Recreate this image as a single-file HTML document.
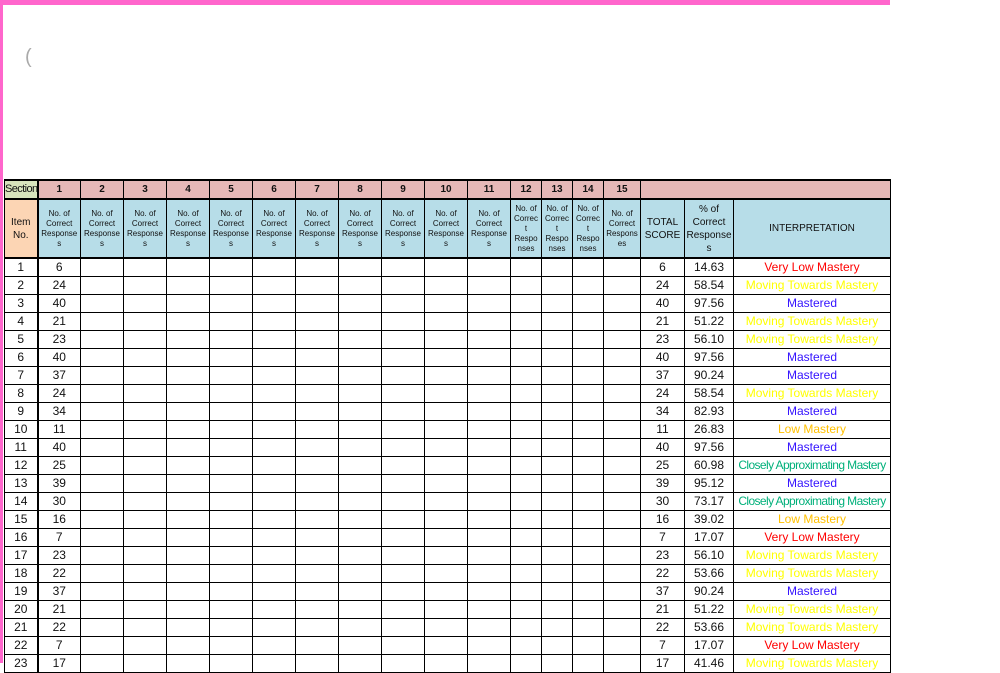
<!DOCTYPE html>
<html><head><meta charset="utf-8"><style>
body{margin:0;width:1000px;height:663px;overflow:hidden;background:#fff;font-family:"Liberation Sans",Arial,sans-serif;position:relative}
.pt{position:absolute;left:0;top:0;width:890px;height:5px;background:#ff66cc}
.pl{position:absolute;left:0;top:0;width:3px;height:663px;background:#ff66cc}
table{position:absolute;left:4px;top:179px;border-collapse:collapse;table-layout:fixed;width:886px}
td{border:1px solid #000;padding:0;text-align:center;font-size:12px;height:17px;line-height:17px;overflow:hidden;white-space:nowrap;color:#111}
tr.h1 td{height:17px;background:#e6b8b7;font-weight:bold;font-size:10px;border-bottom:2px solid #000;border-top:2px solid #000}
tr.h2 td{height:57px;background:#b7dde8;font-size:8px;line-height:10px;white-space:normal;border-bottom:2px solid #000}
td.c0{border-right:2px solid #000}
.s{background:#d8e4bc!important;font-weight:normal!important;font-size:11px!important;letter-spacing:-.6px}
.it{background:#fcd5b4!important;font-size:10px!important;line-height:13px!important}
.big{font-size:10px!important;line-height:13px!important}
.r{color:#ff0000}.y{color:#ffff00}.m{color:#3311ff}.o{color:#ffc000}.g{color:#00b07a;letter-spacing:-0.6px}
</style></head><body>
<div class="pt"></div><div class="pl"></div>
<div style="position:absolute;left:25px;top:46px;font-size:20px;color:#aaa">(</div>
<table>
<colgroup><col style="width:33px"><col style="width:43px"><col style="width:43px"><col style="width:43px"><col style="width:43px"><col style="width:43px"><col style="width:43px"><col style="width:43px"><col style="width:43px"><col style="width:43px"><col style="width:43px"><col style="width:43px"><col style="width:31px"><col style="width:31px"><col style="width:31px"><col style="width:37px"><col style="width:44px"><col style="width:49px"><col style="width:157px"></colgroup>
<tr class="h1"><td class="c0 s">Section</td><td>1</td><td>2</td><td>3</td><td>4</td><td>5</td><td>6</td><td>7</td><td>8</td><td>9</td><td>10</td><td>11</td><td>12</td><td>13</td><td>14</td><td>15</td><td colspan="3"></td></tr>
<tr class="h2"><td class="c0 it">Item<br>No.</td>
<td>No. of Correct Response s</td><td>No. of Correct Response s</td><td>No. of Correct Response s</td><td>No. of Correct Response s</td><td>No. of Correct Response s</td><td>No. of Correct Response s</td><td>No. of Correct Response s</td><td>No. of Correct Response s</td><td>No. of Correct Response s</td><td>No. of Correct Response s</td><td>No. of Correct Response s</td>
<td>No. of<br>Correc<br>t<br>Respo<br>nses</td><td>No. of<br>Correc<br>t<br>Respo<br>nses</td><td>No. of<br>Correc<br>t<br>Respo<br>nses</td><td>No. of Correct Respons es</td>
<td class="big">TOTAL SCORE</td><td class="big">% of Correct Response s</td><td class="big">INTERPRETATION</td></tr>
<tr><td class="c0">1</td><td>6</td><td></td><td></td><td></td><td></td><td></td><td></td><td></td><td></td><td></td><td></td><td></td><td></td><td></td><td></td><td>6</td><td>14.63</td><td class="r">Very Low Mastery</td></tr>
<tr><td class="c0">2</td><td>24</td><td></td><td></td><td></td><td></td><td></td><td></td><td></td><td></td><td></td><td></td><td></td><td></td><td></td><td></td><td>24</td><td>58.54</td><td class="y">Moving Towards Mastery</td></tr>
<tr><td class="c0">3</td><td>40</td><td></td><td></td><td></td><td></td><td></td><td></td><td></td><td></td><td></td><td></td><td></td><td></td><td></td><td></td><td>40</td><td>97.56</td><td class="m">Mastered</td></tr>
<tr><td class="c0">4</td><td>21</td><td></td><td></td><td></td><td></td><td></td><td></td><td></td><td></td><td></td><td></td><td></td><td></td><td></td><td></td><td>21</td><td>51.22</td><td class="y">Moving Towards Mastery</td></tr>
<tr><td class="c0">5</td><td>23</td><td></td><td></td><td></td><td></td><td></td><td></td><td></td><td></td><td></td><td></td><td></td><td></td><td></td><td></td><td>23</td><td>56.10</td><td class="y">Moving Towards Mastery</td></tr>
<tr><td class="c0">6</td><td>40</td><td></td><td></td><td></td><td></td><td></td><td></td><td></td><td></td><td></td><td></td><td></td><td></td><td></td><td></td><td>40</td><td>97.56</td><td class="m">Mastered</td></tr>
<tr><td class="c0">7</td><td>37</td><td></td><td></td><td></td><td></td><td></td><td></td><td></td><td></td><td></td><td></td><td></td><td></td><td></td><td></td><td>37</td><td>90.24</td><td class="m">Mastered</td></tr>
<tr><td class="c0">8</td><td>24</td><td></td><td></td><td></td><td></td><td></td><td></td><td></td><td></td><td></td><td></td><td></td><td></td><td></td><td></td><td>24</td><td>58.54</td><td class="y">Moving Towards Mastery</td></tr>
<tr><td class="c0">9</td><td>34</td><td></td><td></td><td></td><td></td><td></td><td></td><td></td><td></td><td></td><td></td><td></td><td></td><td></td><td></td><td>34</td><td>82.93</td><td class="m">Mastered</td></tr>
<tr><td class="c0">10</td><td>11</td><td></td><td></td><td></td><td></td><td></td><td></td><td></td><td></td><td></td><td></td><td></td><td></td><td></td><td></td><td>11</td><td>26.83</td><td class="o">Low Mastery</td></tr>
<tr><td class="c0">11</td><td>40</td><td></td><td></td><td></td><td></td><td></td><td></td><td></td><td></td><td></td><td></td><td></td><td></td><td></td><td></td><td>40</td><td>97.56</td><td class="m">Mastered</td></tr>
<tr><td class="c0">12</td><td>25</td><td></td><td></td><td></td><td></td><td></td><td></td><td></td><td></td><td></td><td></td><td></td><td></td><td></td><td></td><td>25</td><td>60.98</td><td class="g">Closely Approximating Mastery</td></tr>
<tr><td class="c0">13</td><td>39</td><td></td><td></td><td></td><td></td><td></td><td></td><td></td><td></td><td></td><td></td><td></td><td></td><td></td><td></td><td>39</td><td>95.12</td><td class="m">Mastered</td></tr>
<tr><td class="c0">14</td><td>30</td><td></td><td></td><td></td><td></td><td></td><td></td><td></td><td></td><td></td><td></td><td></td><td></td><td></td><td></td><td>30</td><td>73.17</td><td class="g">Closely Approximating Mastery</td></tr>
<tr><td class="c0">15</td><td>16</td><td></td><td></td><td></td><td></td><td></td><td></td><td></td><td></td><td></td><td></td><td></td><td></td><td></td><td></td><td>16</td><td>39.02</td><td class="o">Low Mastery</td></tr>
<tr><td class="c0">16</td><td>7</td><td></td><td></td><td></td><td></td><td></td><td></td><td></td><td></td><td></td><td></td><td></td><td></td><td></td><td></td><td>7</td><td>17.07</td><td class="r">Very Low Mastery</td></tr>
<tr><td class="c0">17</td><td>23</td><td></td><td></td><td></td><td></td><td></td><td></td><td></td><td></td><td></td><td></td><td></td><td></td><td></td><td></td><td>23</td><td>56.10</td><td class="y">Moving Towards Mastery</td></tr>
<tr><td class="c0">18</td><td>22</td><td></td><td></td><td></td><td></td><td></td><td></td><td></td><td></td><td></td><td></td><td></td><td></td><td></td><td></td><td>22</td><td>53.66</td><td class="y">Moving Towards Mastery</td></tr>
<tr><td class="c0">19</td><td>37</td><td></td><td></td><td></td><td></td><td></td><td></td><td></td><td></td><td></td><td></td><td></td><td></td><td></td><td></td><td>37</td><td>90.24</td><td class="m">Mastered</td></tr>
<tr><td class="c0">20</td><td>21</td><td></td><td></td><td></td><td></td><td></td><td></td><td></td><td></td><td></td><td></td><td></td><td></td><td></td><td></td><td>21</td><td>51.22</td><td class="y">Moving Towards Mastery</td></tr>
<tr><td class="c0">21</td><td>22</td><td></td><td></td><td></td><td></td><td></td><td></td><td></td><td></td><td></td><td></td><td></td><td></td><td></td><td></td><td>22</td><td>53.66</td><td class="y">Moving Towards Mastery</td></tr>
<tr><td class="c0">22</td><td>7</td><td></td><td></td><td></td><td></td><td></td><td></td><td></td><td></td><td></td><td></td><td></td><td></td><td></td><td></td><td>7</td><td>17.07</td><td class="r">Very Low Mastery</td></tr>
<tr><td class="c0">23</td><td>17</td><td></td><td></td><td></td><td></td><td></td><td></td><td></td><td></td><td></td><td></td><td></td><td></td><td></td><td></td><td>17</td><td>41.46</td><td class="y">Moving Towards Mastery</td></tr>
</table>
</body></html>
